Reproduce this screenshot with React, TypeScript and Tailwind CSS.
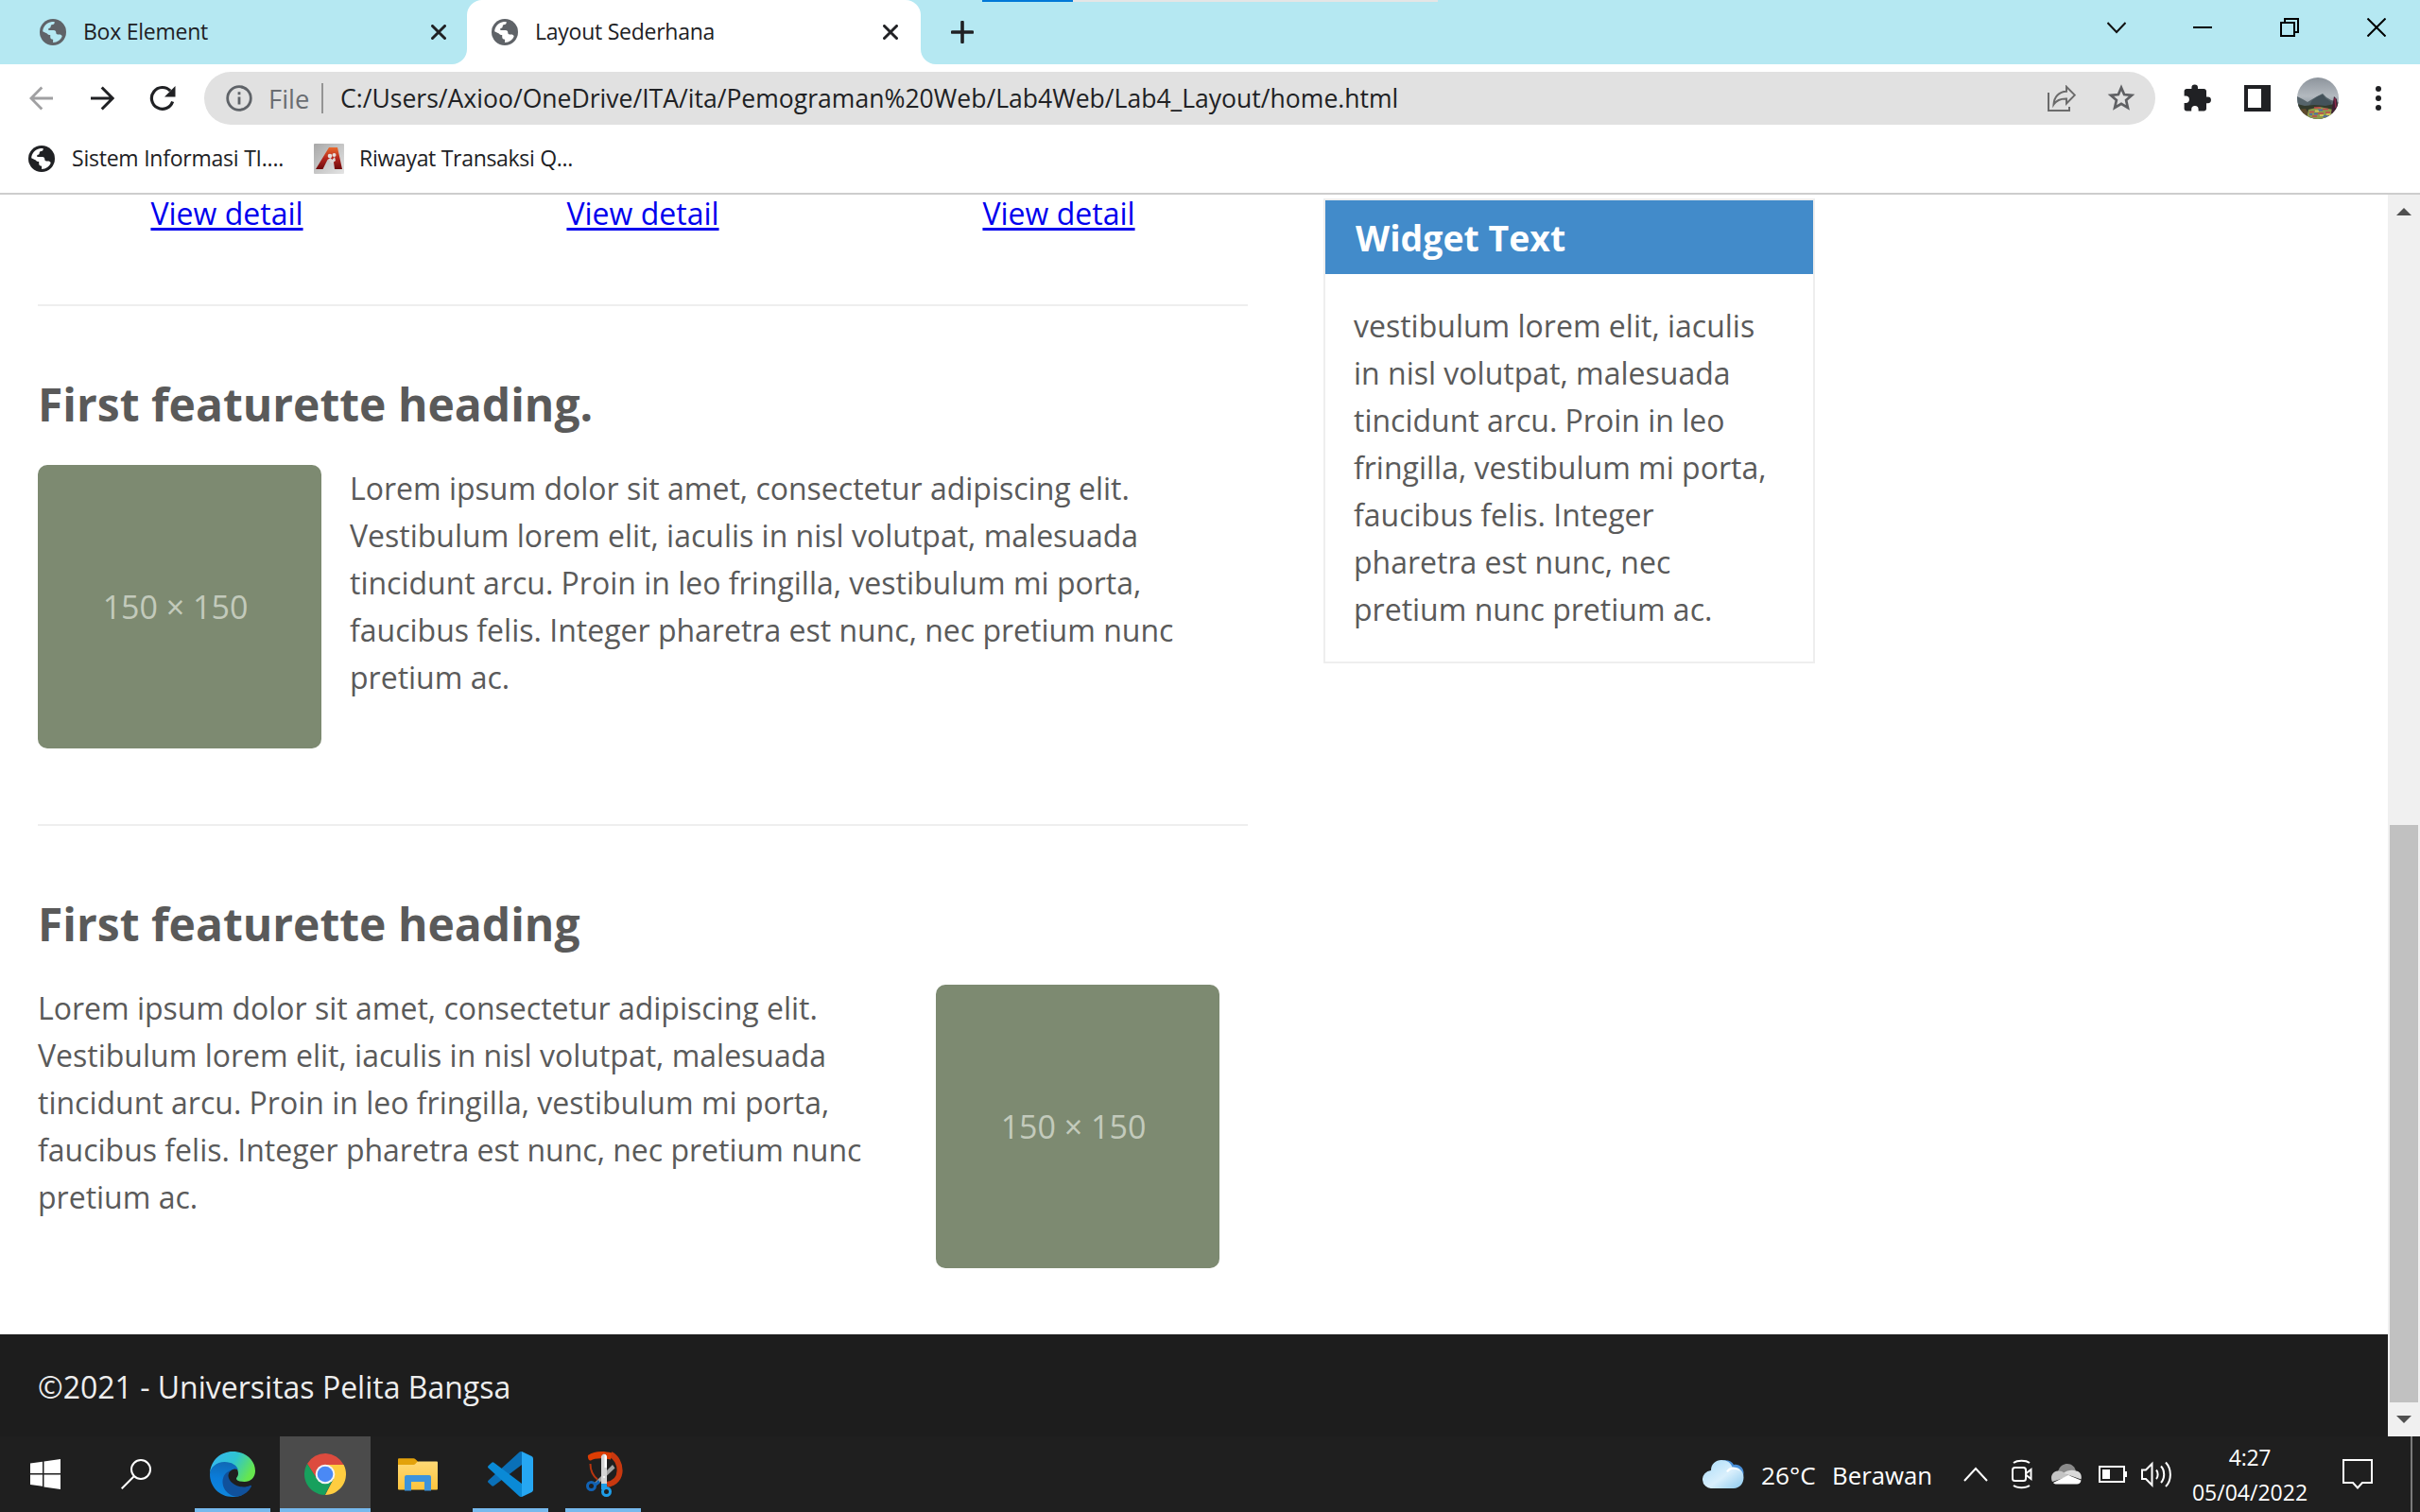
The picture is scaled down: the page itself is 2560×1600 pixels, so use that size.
import React from 'react';

function Globe({ color, inner }: { color: string; inner: string }) {
  return (
    <svg width="28" height="28" viewBox="0 0 28 28" className="shrink-0">
      <circle cx="14" cy="14" r="14" fill={color} />
      <path
        fill={inner}
        d="M3.2 13.2C3.4 8.2 7 4.2 12 3.2c1.6-.2 2.6-.2 3.8.1 0 1.6-.7 2.7-2.2 2.7-1.2 0-1.9.8-1.9 1.9 0 1.3-.9 2-2.4 2v2.1h5.6c1.7 0 2.4 1.1 2.4 2.6 0 1.2.7 1.9 1.9 1.9h1.5c1.6 0 2.5.6 3 1.7-1.3 3.9-5 6.6-9.6 6.8v-3.2c-1.9 0-2.9-1-2.9-2.7v-2c-1.5 0-2.6-.7-3.4-1.7z"
      />
    </svg>
  );
}

function CloseX() {
  return (
    <svg width="16" height="16" viewBox="0 0 16 16" className="shrink-0">
      <path d="M1.5 1.5l13 13M14.5 1.5l-13 13" stroke="#202124" strokeWidth="3" strokeLinecap="round" />
    </svg>
  );
}

function TabStrip() {
  return (
    <div className="relative flex h-[68px] w-full bg-[#b5e8f2]">
      <div className="flex w-[494px] items-center pl-[42px] pr-[22px]">
        <Globe color="#5f6368" inner="#b5e8f2" />
        <span className="ml-[18px] flex-1 pb-px text-[23px] tracking-[-0.25px] text-[#202124]">Box Element</span>
        <CloseX />
      </div>
      <div className="relative flex w-[480px] items-center rounded-t-2xl bg-white pl-[26px] pr-6">
        <svg width="16" height="16" className="absolute bottom-0 -left-4">
          <path d="M16 0v16H0A16 16 0 0 0 16 0z" fill="#fff" />
        </svg>
        <svg width="16" height="16" className="absolute bottom-0 -right-4">
          <path d="M0 0v16h16A16 16 0 0 1 0 0z" fill="#fff" />
        </svg>
        <Globe color="#5f6368" inner="#fff" />
        <span className="ml-[18px] flex-1 pb-px text-[23px] tracking-[-0.25px] text-[#202124]">Layout Sederhana</span>
        <CloseX />
      </div>
      <div className="flex flex-1 items-center pl-8">
        <svg width="24" height="24" viewBox="0 0 24 24">
          <path d="M12 1.5v21M1.5 12h21" stroke="#202124" strokeWidth="3.6" strokeLinecap="round" />
        </svg>
      </div>
      <div className="mr-9 flex h-[58px] items-center gap-[72px]">
        <svg width="20" height="20" viewBox="0 0 20 20" className="-mr-px">
          <path d="M0.5 5l9.5 10 9.500-10" fill="none" stroke="#111" strokeWidth="2" />
        </svg>
        <svg width="20" height="20" viewBox="0 0 20 20">
          <path d="M0 10h20" stroke="#000" strokeWidth="2" />
        </svg>
        <svg width="20" height="20" viewBox="0 0 20 20">
          <path d="M1 5h14v14H1zM5 5V1h14v14h-4" fill="none" stroke="#000" strokeWidth="2" />
        </svg>
        <svg width="20" height="20" viewBox="0 0 20 20">
          <path d="M.5.5l19 19M19.500.5l-19 19" stroke="#000" strokeWidth="2" />
        </svg>
      </div>
      <div className="absolute left-[1039px] top-0 h-0.5 w-[482px] bg-[#e5e5e5]">
        <div className="h-0.5 w-24 bg-[#0078d7]" />
      </div>
    </div>
  );
}

function Avatar() {
  return (
    <svg width="44" height="44" viewBox="0 0 44 44" className="ml-7 shrink-0">
      <defs>
        <linearGradient id="sky" x1="0" y1="0" x2="0" y2="1">
          <stop offset="0" stopColor="#8d949c" />
          <stop offset="0.45" stopColor="#b3b9bf" />
          <stop offset="0.6" stopColor="#9aa3aa" />
        </linearGradient>
        <clipPath id="round"><circle cx="22" cy="22" r="22" /></clipPath>
      </defs>
      <g clipPath="url(#round)">
        <rect width="44" height="44" fill="url(#sky)" />
        <path d="M0 20l6 3 5 3 5-3 5-3 6-3 4 4 5 3 8 2v10H0z" fill="#56646b" />
        <path d="M16 24l6-4 5-2 3 4 6 4v6H12z" fill="#44525a" />
        <path d="M0 28l8 2 10-1 12 1 14-3v17H0z" fill="#333a2c" />
        <path d="M0 34l9-1 3 5-3 6H0z" fill="#5e4a2d" />
        <path d="M12 34l12-3 14 3-2 10H10z" fill="#8e9a4c" />
        <path d="M18 32h7M27 33.500h6M13 36.500h5M22 38h6M30 37h5M16 41h5" stroke="#c4474e" strokeWidth="1.6" />
        <path d="M22 34.500h5M18 38.500h4M27 41h6M13 39h3" stroke="#4a63b0" strokeWidth="1.5" />
        <path d="M19 35.500h4M24 40h4M31 39h4" stroke="#e0d25a" strokeWidth="1.4" />
        <path d="M39 20l3 3 1 12-3 4-4-1z" fill="#3f1f33" />
        <path d="M40 22l1 10" stroke="#8b2b4a" strokeWidth="1.5" />
      </g>
    </svg>
  );
}

function Toolbar() {
  return (
    <div className="flex h-[72px] w-full items-center bg-white">
      <svg width="26" height="26" viewBox="0 0 26 26" className="ml-[31px] shrink-0">
        <path d="M25 13H2.500M13.300 1.500L1.900 13l11.400 11.500" fill="none" stroke="#a0a0a2" strokeWidth="2.800" />
      </svg>
      <svg width="26" height="26" viewBox="0 0 26 26" className="ml-[38px] shrink-0">
        <path d="M1 13h22.500M12.700 1.500L24.100 13 12.700 24.500" fill="none" stroke="#202124" strokeWidth="3" />
      </svg>
      <svg width="28" height="28" viewBox="0 0 28 28" className="ml-[37px] mr-px shrink-0">
        <path d="M24.600 17.500A11.400 11.400 0 1 1 22.200 6.200" fill="none" stroke="#202124" strokeWidth="3.200" />
        <path d="M27.500 1v11.500H16z" fill="#202124" />
      </svg>
      <div className="ml-[29px] flex h-14 w-[2064px] items-center rounded-full bg-[#e1e1e1] pl-[23px] pr-[21px]">
        <svg width="28" height="28" viewBox="0 0 28 28" className="shrink-0">
          <circle cx="14" cy="14" r="12.300" fill="none" stroke="#5f6368" strokeWidth="2.800" />
          <path d="M14 12.500v8M14 7.300v3" stroke="#5f6368" strokeWidth="2.800" />
        </svg>
        <span className="ml-[17px] w-[56px] pt-px text-[27.400px] text-[#6a6d71]">File</span>
        <div className="h-8 w-0.5 bg-[#949494]" />
        <span className="ml-[18px] flex-1 whitespace-nowrap pt-0.5 text-[26.560px] text-[#202124]">
          C:/Users/Axioo/OneDrive/ITA/ita/Pemograman%20Web/Lab4Web/Lab4_Layout/home.html
        </span>
        <svg width="30" height="28" viewBox="0 0 30 28" className="shrink-0">
          <path d="M1 8v19h22v-4" fill="none" stroke="#6b6b6b" strokeWidth="2" />
          <path d="M6.500 20.500C7 12.500 12 7 20 6.700V1.800l8.800 8.800L20 19.500v-5C13.500 14.300 9.500 16 6.500 20.500z" fill="none" stroke="#6b6b6b" strokeWidth="2" />
        </svg>
        <svg width="30" height="30" viewBox="0 0 30 30" className="ml-[33px] shrink-0">
          <path d="M15 3.800l3.100 7.300 8 .7-6 5.300 1.800 7.800-6.900-4.100-6.900 4.100 1.800-7.800-6-5.300 8-.7z" fill="none" stroke="#5f6063" strokeWidth="2.700" />
        </svg>
      </div>
      <svg width="30" height="30" viewBox="0 0 30 30" className="ml-[30px] shrink-0">
        <path
          fill="#202124"
          d="M25.600 13.500H24V7.500c0-1.500-1.200-2.500-2.500-2.500H15V3.800a3.300 3.300 0 0 0-6.600 0V5H3.100C1.700 5 .6 6 .6 7.500v5.100h1.600a3.700 3.700 0 0 1 0 7.400H.6v6c0 1.500 1.100 2.500 2.500 2.500h5.100v-1.700a3.700 3.700 0 0 1 7.400 0v1.700h5.900c1.400 0 2.500-1.100 2.500-2.500v-5.800h1.600a3.300 3.300 0 0 0 0-6.700z"
        />
      </svg>
      <div className="ml-[34px] h-7 w-7 shrink-0 border-4 border-r-[10px] border-[#202124] bg-white" />
      <Avatar />
      <div className="ml-[39px] flex flex-col gap-1">
        <i className="size-1.5 rounded-full bg-[#202124]" />
        <i className="size-1.5 rounded-full bg-[#202124]" />
        <i className="size-1.5 rounded-full bg-[#202124]" />
      </div>
    </div>
  );
}

function Bookmarks() {
  return (
    <div className="flex h-[66px] w-full items-center border-b-2 border-[#cdcdcd] bg-white pb-2 pl-[30px] text-[23px] text-[#202124]">
      <Globe color="#202124" inner="#fff" />
      <span className="ml-[18px] w-[256px] whitespace-nowrap pb-px tracking-[-0.230px]">Sistem Informasi TI....</span>
      <svg width="32" height="32" viewBox="0 0 32 32" className="shrink-0">
        <defs>
          <linearGradient id="silver" x1="0" y1="0" x2="1" y2="1">
            <stop offset="0" stopColor="#a8a8a8" />
            <stop offset="1" stopColor="#e4e4e4" />
          </linearGradient>
          <linearGradient id="ember" x1="0" y1="0" x2="0" y2="1">
            <stop offset="0" stopColor="#ea6a2c" />
            <stop offset="0.500" stopColor="#b3261e" />
            <stop offset="1" stopColor="#6d0a0c" />
          </linearGradient>
        </defs>
        <rect width="32" height="32" rx="1" fill="url(#silver)" />
        <path d="M16 4h9l5 23h-8l-1.500-11-3 3-3-2-5 10H2z" fill="url(#ember)" />
        <circle cx="17" cy="13" r="2.300" fill="#e6dedd" />
        <circle cx="21.500" cy="12" r="2" fill="#e6dedd" />
        <path d="M14.500 17l3-2 2 2 2.500-3 1 4-4 3z" fill="#ddd6d5" />
      </svg>
      <span className="ml-4 whitespace-nowrap pb-px tracking-[-0.300px]">Riwayat Transaksi Q...</span>
    </div>
  );
}

const LOREM = [
  'Lorem ipsum dolor sit amet, consectetur adipiscing elit.',
  'Vestibulum lorem elit, iaculis in nisl volutpat, malesuada',
  'tincidunt arcu. Proin in leo fringilla, vestibulum mi porta,',
  'faucibus felis. Integer pharetra est nunc, nec pretium nunc',
  'pretium ac.',
];

const WIDGET = [
  'vestibulum lorem elit, iaculis',
  'in nisl volutpat, malesuada',
  'tincidunt arcu. Proin in leo',
  'fringilla, vestibulum mi porta,',
  'faucibus felis. Integer',
  'pharetra est nunc, nec',
  'pretium nunc pretium ac.',
];

function Lines({ lines }: { lines: string[] }) {
  return (
    <p className="whitespace-nowrap">
      {lines.map((line) => (
        <span key={line} className="block">{line}</span>
      ))}
    </p>
  );
}

function Placeholder() {
  return (
    <div className="flex size-[300px] shrink-0 items-center justify-center rounded-[10px] bg-[#7d8a71] pr-[9px] text-[34px] text-[#c3cabc]">
      150 × 150
    </div>
  );
}

function Page() {
  return (
    <div className="flex min-h-0 flex-1">
      <div className="flex flex-1 flex-col overflow-hidden bg-white text-[32px] leading-[50px] text-[#5a5a5a]">
        <div className="flex h-[1206px] items-start">
          <main className="w-[1320px] pl-10">
            <div className="-ml-5 flex w-[1320px] leading-10">
              {[0, 1, 2].map((n) => (
                <div key={n} className="w-[440px] shrink-0 text-center">
                  <a className="text-[#0000ee] underline decoration-[3px] underline-offset-[3px]">View detail</a>
                </div>
              ))}
            </div>
            <hr className="mt-[76px] border-t-2 border-[#eeeeee]" />
            <h2 className="mt-[79px] text-[48px] font-bold leading-[50px]">First featurette heading.</h2>
            <div className="mt-[39px] flex h-[300px] gap-[30px]">
              <Placeholder />
              <Lines lines={LOREM} />
            </div>
            <hr className="mt-20 border-t-2 border-[#eeeeee]" />
            <h2 className="mt-[79px] text-[48px] font-bold leading-[50px]">First featurette heading</h2>
            <div className="mt-[39px] flex h-[300px] justify-between pr-[30px]">
              <Lines lines={LOREM} />
              <Placeholder />
            </div>
          </main>
          <aside className="ml-20 mt-1 w-[520px] border-2 border-[#eeeeee]">
            <h3 className="flex h-[78px] items-center bg-[#428bca] pl-8 pt-px text-[37.440px] font-bold text-white">Widget Text</h3>
            <div className="p-[30px]">
              <Lines lines={WIDGET} />
            </div>
          </aside>
        </div>
        <footer className="flex-1 bg-[#1d1d1d] pl-10 pt-[31px] text-[#eeeeee]">©2021 - Universitas Pelita Bangsa</footer>
      </div>
      <div className="flex w-[34px] flex-col items-center bg-[#f0f0f0] py-3.5">
        <svg width="16" height="8"><path d="M8 0l8 8H0z" fill="#505050" /></svg>
        <div className="mt-[645px] h-[611px] w-[30px] shrink-0 bg-[#c1c1c1]" />
        <svg width="16" height="8" className="mt-3.5"><path d="M8 8l8-8H0z" fill="#505050" /></svg>
      </div>
    </div>
  );
}

function EdgeIcon() {
  return (
    <svg width="48" height="48" viewBox="0 0 48 48">
      <defs>
        <linearGradient id="e1" x1="0" y1="0.200" x2="1" y2="0.600">
          <stop offset="0" stopColor="#35b6f2" />
          <stop offset="0.500" stopColor="#2fc4d0" />
          <stop offset="0.950" stopColor="#66e64e" />
        </linearGradient>
        <linearGradient id="e2" x1="0.500" y1="0" x2="0.400" y2="1">
          <stop offset="0" stopColor="#1068b4" />
          <stop offset="0.500" stopColor="#0a7ddb" />
          <stop offset="1" stopColor="#0f86dc" />
        </linearGradient>
      </defs>
      <path d="M0 23C1 9 11.500 0 24 0c14 0 24 9.500 24 20.500 0 7-5 11.500-11.500 11.500-5.500 0-8.500-1.700-8.500-3.300 0-1.200 2-2 2-5.700 0-6-5.500-11-13-11C8 12 1.500 17 0 23z" fill="url(#e1)" />
      <path d="M0 24c0-7 7-13 15.500-13C23 11 28.500 14.500 30 19.500c-3-1.500-5-1-7.500.5C19 22 18 26 19 31c1.500 8 8 14 16 14.500-3.500 1.800-7 2.500-11 2.500C10 48 0 37 0 24z" fill="url(#e2)" />
      <path d="M22.500 19.500C16 22 13.200 27 13.500 33c.5 8 7 14 14.500 14.700 6-.5 12.500-4.200 15.800-10.500.6-1.200-.3-1.800-1.300-1.200C33 40.500 20 34 19.500 26c-.1-2.500 1-5 3-6.500z" fill="#10519c" />
    </svg>
  );
}

function ChromeIcon() {
  return (
    <svg width="46" height="46" viewBox="0 0 46 46">
      <path d="M23 13h19.600A22 22 0 0 1 23 45l8.700-17z" fill="#ffcd40" />
      <path d="M14.300 28L4 11.900A22 22 0 0 1 42.600 13H23z" fill="#dd4b3e" />
      <path d="M4 11.900L14.300 28 23 33l8.500-5L22.500 45A22 22 0 0 1 4 11.900z" fill="#17a05d" />
      <circle cx="23" cy="23" r="10.300" fill="#f4f4f4" />
      <circle cx="23" cy="23" r="8.300" fill="#4a89f5" />
    </svg>
  );
}

function ExplorerIcon() {
  return (
    <svg width="42" height="35" viewBox="0 0 42 35">
      <defs>
        <linearGradient id="fold" x1="0" y1="0" x2="0" y2="1">
          <stop offset="0" stopColor="#ffd975" />
          <stop offset="1" stopColor="#fcc43d" />
        </linearGradient>
      </defs>
      <path d="M0 1.500Q0 .3 1 .3h15.500q1 0 1.800.8L21 3.500V10H0z" fill="#e3a20b" />
      <path d="M0 7h16.500q1.200 0 2-.9l1.300-1.500q.8-1 2-1H41q1 0 1 1v28q0 1-1 1H1q-1 0-1-1z" fill="url(#fold)" />
      <path d="M7 34.600V20q0-2 2-2h24q2 0 2 2v14.600h-7V25H14v9.600z" fill="#3c93dc" />
    </svg>
  );
}

function CodeIcon() {
  return (
    <svg width="48" height="48" viewBox="0 0 48 48">
      <path d="M36 0v14L6.500 36.200q-1.300 1-2.500-.1l-3.300-3q-1.400-1.300 0-2.600L33 1q1.300-1.200 3-1z" fill="#0a70b8" />
      <path d="M36 48V34L6.500 11.800q-1.300-1-2.500.1l-3.300 3q-1.400 1.300 0 2.600L33 47q1.300 1.200 3 1z" fill="#0a8ad6" />
      <path d="M36 0l10.500 5q1.500.8 1.500 2.500v33q0 1.700-1.500 2.500L36 48z" fill="#26a7f2" />
    </svg>
  );
}

function SnipIcon() {
  return (
    <svg width="40" height="48" viewBox="0 0 40 48">
      <path d="M26 3c12 6 15 29-4 32" fill="none" stroke="#c8380f" strokeWidth="6" />
      <path d="M2 4C8-.5 18-1 27 1.500l-1 7C17 6.500 9 7 5 9.500 2.500 10 1.500 6 2 4z" fill="#dc3d04" />
      <path d="M4.500 13c0 7 2 12 7.500 16.500" fill="none" stroke="#b8350f" strokeWidth="2" />
      <path d="M28 14l2.500 3.500L12 35l-3-2z" fill="#a3a3a3" />
      <path d="M16 5q3-5 6 0v29h-6z" fill="#d4d4d4" />
      <path d="M19.500 3q2 0 2.500 3v11h-2.500z" fill="#fff" />
      <circle cx="19" cy="27" r="1" fill="#fff" />
      <circle cx="5.500" cy="36.500" r="4" fill="none" stroke="#1263b5" strokeWidth="3" />
      <path d="M9 34l4-4 2 3-5 4z" fill="#1263b5" />
      <path d="M16 34h6v6h-6z" fill="#1e9de8" />
      <circle cx="21.500" cy="42.500" r="4" fill="none" stroke="#1e9de8" strokeWidth="3" />
    </svg>
  );
}

function TaskItem({ slot, bar, active, children }: { slot: string; bar?: string; active?: boolean; children: React.ReactNode }) {
  return (
    <div className={`relative flex h-20 shrink-0 items-center justify-center ${slot} ${active ? 'bg-[#4b4b4b]' : ''}`}>
      {children}
      {bar && <div className={`absolute bottom-0 h-1 bg-[#76b9ed] ${bar}`} />}
    </div>
  );
}

function Taskbar() {
  return (
    <div className="flex h-20 w-full shrink-0 items-center bg-[#1f1f1f] text-white">
      <TaskItem slot="w-24">
        <svg width="32" height="32" viewBox="0 0 32 32">
          <path d="M0 4.500L13 2.700V15H0zM14.500 2.500L32 0v15H14.500zM0 16.500h13v12.300L0 27zM14.500 16.500H32V32l-17.500-2.500z" fill="#fff" />
        </svg>
      </TaskItem>
      <TaskItem slot="w-24">
        <svg width="32" height="32" viewBox="0 0 32 32">
          <circle cx="21" cy="11" r="10" fill="none" stroke="#fff" strokeWidth="2" />
          <path d="M13.500 18.500L.7 31.300" stroke="#fff" strokeWidth="2" />
        </svg>
      </TaskItem>
      <TaskItem slot="w-[108px]" bar="left-3.5 w-20"><EdgeIcon /></TaskItem>
      <div className="-ml-1">
        <TaskItem slot="w-24" bar="left-0 w-24" active><ChromeIcon /></TaskItem>
      </div>
      <TaskItem slot="w-[100px]"><ExplorerIcon /></TaskItem>
      <TaskItem slot="w-24" bar="left-2 w-20"><CodeIcon /></TaskItem>
      <TaskItem slot="w-[100px] pl-[3px]" bar="left-2.5 w-20"><SnipIcon /></TaskItem>
      <div className="flex-1" />
      <svg width="44" height="30" viewBox="0 0 44 30" className="mr-[18px]">
        <defs>
          <linearGradient id="cl" x1="0" y1="0" x2="1" y2="1">
            <stop offset="0" stopColor="#a9dcfa" />
            <stop offset="0.550" stopColor="#d9effc" />
            <stop offset="1" stopColor="#8cc9ee" />
          </linearGradient>
        </defs>
        <path d="M18 1c8-2 13 0 15 4 6-1 10 3 10.500 8 0 4-1 6-3 8L22 18z" fill="#4a90d9" />
        <path d="M10 30a9.500 9.500 0 0 1-1-19C9 4 14 0 20 0c6 0 10 3 11.500 7.500C39 7 43.500 12 43.500 18.500 43.500 25 39 30 33 30z" fill="url(#cl)" />
        <path d="M25 12c3-5 10-6 15 0-5-3-10-3-13 1z" fill="#fff" />
      </svg>
      <span className="w-[75px] whitespace-nowrap pt-[3px] text-[26.200px]">26°C</span>
      <span className="w-[139px] whitespace-nowrap pt-[3px] text-[25.800px]">Berawan</span>
      <svg width="26" height="16" viewBox="0 0 26 16">
        <path d="M1 15L13 2l12 13" fill="none" stroke="#fff" strokeWidth="2" />
      </svg>
      <svg width="22" height="32" viewBox="0 0 22 32" className="ml-[25px]">
        <path d="M2 4c4-3 13-3 17 0M2 28c4 3 13 3 17 0" fill="none" stroke="#fff" strokeWidth="2" />
        <rect x="1" y="9" width="14" height="14" rx="2.500" fill="none" stroke="#fff" strokeWidth="2" />
        <path d="M15.500 15l5-4v10l-5-4" fill="none" stroke="#fff" strokeWidth="2" />
      </svg>
      <svg width="32" height="22" viewBox="0 0 32 22" className="ml-5">
        <path d="M7 8C9 2 13 0 17 0c4.500 0 8 3 9 8l-8 6z" fill="#8a8a8a" />
        <path d="M1 19c-2.500-5 0-11 6-11.500 3-.2 5 .8 6.500 2L19 13z" fill="#c4c4c4" />
        <path d="M13 10c3-3 9-4 13-2.500 5 .5 6.500 5 5.500 9z" fill="#dadada" />
        <path d="M2 20l16-8 13.500 5.500c-.5 2.500-2 4-4.500 4H6c-2 0-3-.5-4-1.500z" fill="#fff" />
      </svg>
      <svg width="30" height="18" viewBox="0 0 30 18" className="ml-[18px]">
        <path d="M1 1h26v16H1z" fill="none" stroke="#fff" strokeWidth="2" />
        <path d="M4 4h8v10H4zM27 6h3v6h-3z" fill="#fff" />
      </svg>
      <svg width="34" height="28" viewBox="0 0 34 28" className="ml-[15px]">
        <path d="M1 9.500h4L11.500 3v22.500L5 19H1z" fill="none" stroke="#fff" strokeWidth="2" />
        <path d="M16 9.500c2.200 2.500 2.200 7 0 9.500M21 5.500c4.300 4.500 4.300 13 0 17.500M26 1.500c6.500 7 6.500 19 0 25.500" fill="none" stroke="#fff" strokeWidth="2" />
      </svg>
      <div className="ml-[19px] flex h-20 w-[124px] flex-col items-center whitespace-nowrap pt-1 text-[23px] leading-[37px]">
        <span className="tracking-[-0.300px]">4:27</span>
        <span>05/04/2022</span>
      </div>
      <svg width="32" height="32" viewBox="0 0 32 32" className="ml-9">
        <path d="M1 1h30v24H21l-5 5.500L11 25H1z" fill="none" stroke="#fff" strokeWidth="2" />
      </svg>
      <div className="ml-10 mr-2 h-20 w-0.5 bg-[#7a7a7a]" />
    </div>
  );
}

export default function App() {
  return (
    <div className="flex h-[1600px] w-[2560px] flex-col overflow-hidden bg-white font-['Open_Sans',sans-serif]">
      <TabStrip />
      <Toolbar />
      <Bookmarks />
      <Page />
      <Taskbar />
    </div>
  );
}
